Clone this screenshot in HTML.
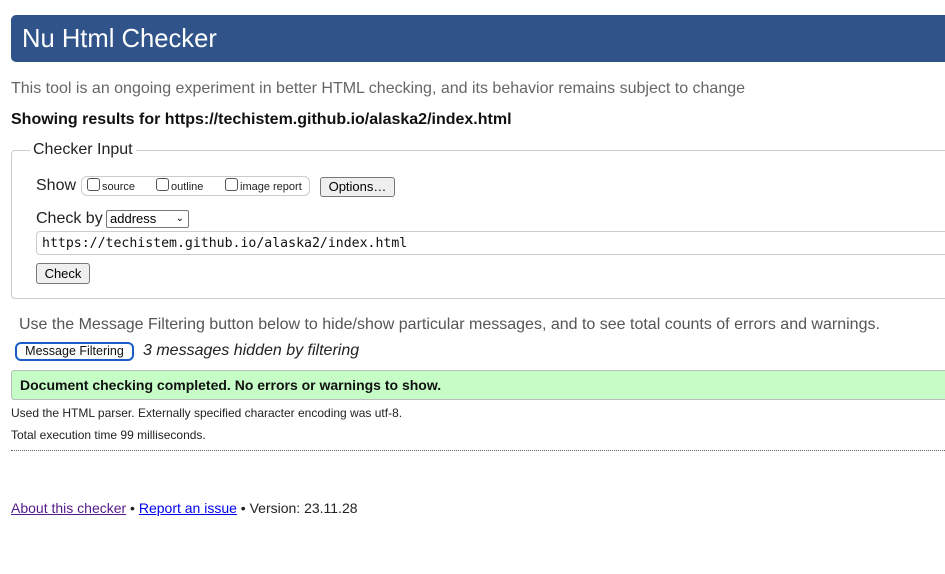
<!DOCTYPE html>
<html><head><style>
body{margin:0;width:945px;height:574px;overflow:hidden;background:#fff;font-family:"Liberation Sans",sans-serif;position:relative}
.a{position:absolute;white-space:nowrap}
.hdr{left:11px;top:15px;width:950px;height:47px;background:#30548a;border-radius:5px 0 0 5px;color:#fff;font-size:25.6px;line-height:48px;padding-left:11px;box-sizing:border-box}
.cb{display:inline-block;width:11px;height:11px;border:1px solid #555;border-radius:3px;vertical-align:-1px;margin-right:2px;background:#fff}
.btn{border:1px solid #777;border-radius:3px;background:#efefef;font-size:13px;text-align:center;box-sizing:border-box}
</style></head><body>
<div class="a hdr">Nu Html Checker</div>
<div class="a" style="left:11px;top:80px;font-size:16px;color:#666">This tool is an ongoing experiment in better HTML checking, and its behavior remains subject to change</div>
<div class="a" style="left:11px;top:111px;font-size:16px;font-weight:bold;color:#111">Showing results for https://techistem.github.io/alaska2/index.html</div>
<div class="a" style="left:11px;top:150px;width:950px;height:149px;border:1px solid #ccc;border-radius:4px;box-sizing:border-box"></div>
<div class="a" style="left:30px;top:141px;font-size:16px;background:#fff;padding:0 3px;color:#222">Checker Input</div>
<div class="a" style="left:36px;top:177px;font-size:16px;color:#222">Show</div>
<div class="a" style="left:81px;top:176px;width:229px;height:20px;border:1px solid #ccc;border-radius:6px;box-sizing:border-box"></div>
<div class="a" style="left:87px;top:178px;font-size:11px;color:#222"><span class="cb"></span>source</div>
<div class="a" style="left:156px;top:178px;font-size:11px;color:#222"><span class="cb"></span>outline</div>
<div class="a" style="left:225px;top:178px;font-size:11px;color:#222"><span class="cb"></span>image report</div>
<div class="a btn" style="left:320px;top:177px;width:75px;height:20px;line-height:18px">Options…</div>
<div class="a" style="left:36px;top:210px;font-size:16px;color:#222">Check by</div>
<div class="a" style="left:106px;top:210px;width:83px;height:18px;border:1px solid #777;border-radius:2px;box-sizing:border-box;font-size:13px;line-height:16px;padding-left:3px">address<span style="position:absolute;right:4px;top:0;font-size:10px">&#8964;</span></div>
<div class="a" style="left:36px;top:231px;width:920px;height:24px;border:1px solid #ccc;border-radius:4px;box-sizing:border-box;font-family:'DejaVu Sans Mono','Liberation Mono',monospace;font-size:13.2px;line-height:23px;padding-left:5px;color:#111">https://techistem.github.io/alaska2/index.html</div>
<div class="a btn" style="left:36px;top:263px;width:54px;height:21px;line-height:19px">Check</div>
<div class="a" style="left:19px;top:316px;font-size:16px;color:#555">Use the Message Filtering button below to hide/show particular messages, and to see total counts of errors and warnings.</div>
<div class="a" style="left:15px;top:342px;width:119px;height:19px;border:2px solid #1a5cc8;border-radius:6px;box-sizing:border-box;font-size:12.5px;line-height:15px;text-align:center;color:#111">Message Filtering</div>
<div class="a" style="left:143px;top:342px;font-size:16px;font-style:italic;color:#222">3 messages hidden by filtering</div>
<div class="a" style="left:11px;top:370px;width:950px;height:30px;background:#c6fcc6;border:1px solid #bbb;border-radius:3px;box-sizing:border-box;font-size:14px;font-weight:bold;line-height:28px;padding-left:8px;color:#111">Document checking completed. No errors or warnings to show.</div>
<div class="a" style="left:11px;top:406px;font-size:12px;color:#222">Used the HTML parser. Externally specified character encoding was utf-8.</div>
<div class="a" style="left:11px;top:428px;font-size:12px;color:#222">Total execution time 99 milliseconds.</div>
<div class="a" style="left:11px;top:450px;width:940px;border-top:1px dotted #666"></div>
<div class="a" style="left:11px;top:500px;font-size:14px;color:#222"><span style="color:#551a8b;text-decoration:underline">About this checker</span> • <span style="color:#0000ee;text-decoration:underline">Report an issue</span> • Version: 23.11.28</div>
</body></html>
